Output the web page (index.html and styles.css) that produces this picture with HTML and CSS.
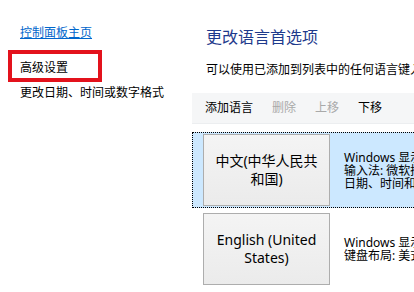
FILE: index.html
```html
<!DOCTYPE html>
<html lang="zh-CN">
<head>
<meta charset="utf-8">
<title>语言</title>
<link rel="stylesheet" href="styles.css">
</head>
<body>
<div class="page">
  <aside class="side">
    <a class="side-link" href="#">控制面板主页</a>
    <div class="side-item side-item-first">高级设置</div>
    <div class="side-item">更改日期、时间或数字格式</div>
    <div class="mark"></div>
  </aside>
  <main class="main">
    <h1 class="title">更改语言首选项</h1>
    <p class="desc">可以使用已添加到列表中的任何语言键入。列表顶部的语言是你的主要语言。</p>
    <div class="toolbar">
      <span class="tool">添加语言</span>
      <span class="tool tool-off">删除</span>
      <span class="tool tool-off">上移</span>
      <span class="tool">下移</span>
    </div>
    <div class="list">
      <div class="row row-sel">
        <div class="lang">中文(中华人民共<br>和国)</div>
        <div class="info">Windows 显示语言: 已启用<br>输入法: 微软拼音<br>日期、时间和数字格式</div>
      </div>
      <div class="row">
        <div class="lang">English (United<br>States)</div>
        <div class="info">Windows 显示语言: 可用<br>键盘布局: 美式键盘</div>
      </div>
    </div>
  </main>
</div>
</body>
</html>
```
FILE: styles.css
```css
html, body {
  margin: 0;
  padding: 0;
  background: #ffffff;
}
body {
  width: 414px;
  height: 292px;
  overflow: hidden;
  font-family: "Noto Sans", "Noto Sans CJK SC", sans-serif;
  font-size: 12px;
  color: #000000;
}
.page {
  display: flex;
  width: 414px;
  height: 292px;
}
.side {
  position: relative;
  flex: 0 0 192px;
  display: flex;
  flex-direction: column;
  padding: 25px 0 0 20px;
  box-sizing: border-box;
}
.side-link {
  color: #0066cc;
  text-decoration: underline;
  line-height: 16px;
  white-space: nowrap;
}
.side-item {
  line-height: 16px;
  white-space: nowrap;
  margin-top: 9px;
}
.side-item-first {
  margin-top: 19px;
}
.mark {
  position: absolute;
  left: 8px;
  top: 50px;
  width: 94px;
  height: 32px;
  box-sizing: border-box;
  border: 4px solid #e3121c;
}
.main {
  flex: 1 1 auto;
  min-width: 0;
  display: flex;
  flex-direction: column;
  padding-top: 27px;
}
.title {
  margin: 0;
  padding-left: 14px;
  font-size: 16px;
  font-weight: normal;
  line-height: 20px;
  color: #1e3a8c;
  white-space: nowrap;
}
.desc {
  margin: 15px 0 0;
  padding-left: 14px;
  line-height: 16px;
  white-space: nowrap;
}
.toolbar {
  margin-top: 15px;
  height: 30px;
  display: flex;
  align-items: center;
  gap: 19px;
  padding-left: 13px;
  background: #f5f6f7;
  border-bottom: 1px solid #eceef0;
  white-space: nowrap;
}
.tool {
  line-height: 16px;
}
.tool-off {
  color: #a9a9a9;
}
.list {
  margin-top: 8px;
  display: flex;
  flex-direction: column;
  gap: 3px;
}
.row {
  display: flex;
  align-items: center;
  height: 76px;
  box-sizing: border-box;
  border: 1px solid transparent;
  border-right: none;
  padding-left: 10px;
  white-space: nowrap;
}
.row-sel {
  background: #cce8ff;
  border: 1px dotted #000000;
  border-right: none;
}
.lang {
  flex: 0 0 127px;
  height: 72px;
  box-sizing: border-box;
  border: 1px solid #adadad;
  background: linear-gradient(#f4f4f4, #ebebeb);
  display: flex;
  align-items: center;
  justify-content: center;
  text-align: center;
  font-size: 14px;
  line-height: 18px;
}
.info {
  padding-left: 14px;
  line-height: 13px;
}
```
